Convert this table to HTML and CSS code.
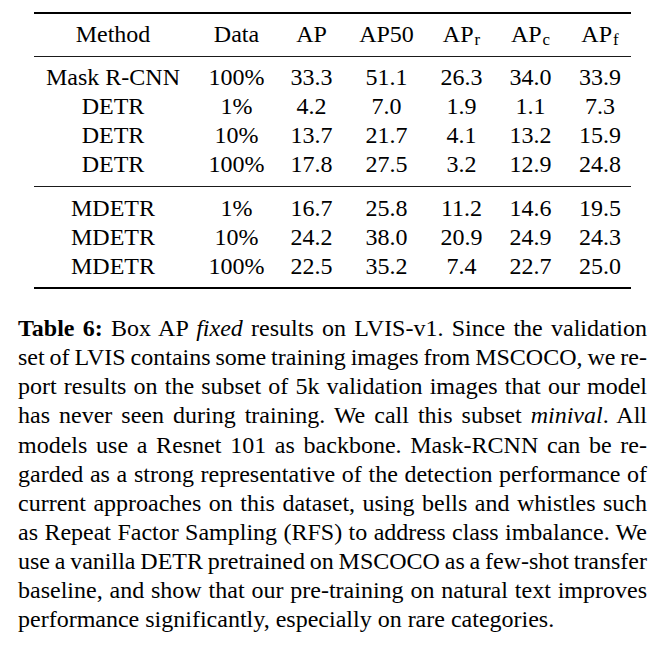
FILE: index.html
```html
<!DOCTYPE html>
<html>
<head>
<meta charset="utf-8">
<link rel="stylesheet" href="styles.css">
</head>
<body>
<div class="page">
  <table class="results">
    <colgroup>
      <col class="c-method"><col class="c-data"><col class="c-ap"><col class="c-ap50"><col class="c-apr"><col class="c-apc"><col class="c-apf">
    </colgroup>
    <thead>
      <tr><th>Method</th><th>Data</th><th>AP</th><th>AP50</th><th>AP<sub>r</sub></th><th>AP<sub>c</sub></th><th>AP<sub>f</sub></th></tr>
    </thead>
    <tbody class="grp grp-a">
      <tr><td>Mask R-CNN</td><td>100%</td><td>33.3</td><td>51.1</td><td>26.3</td><td>34.0</td><td>33.9</td></tr>
      <tr><td>DETR</td><td>1%</td><td>4.2</td><td>7.0</td><td>1.9</td><td>1.1</td><td>7.3</td></tr>
      <tr><td>DETR</td><td>10%</td><td>13.7</td><td>21.7</td><td>4.1</td><td>13.2</td><td>15.9</td></tr>
      <tr><td>DETR</td><td>100%</td><td>17.8</td><td>27.5</td><td>3.2</td><td>12.9</td><td>24.8</td></tr>
    </tbody>
    <tbody class="grp grp-b">
      <tr><td>MDETR</td><td>1%</td><td>16.7</td><td>25.8</td><td>11.2</td><td>14.6</td><td>19.5</td></tr>
      <tr><td>MDETR</td><td>10%</td><td>24.2</td><td>38.0</td><td>20.9</td><td>24.9</td><td>24.3</td></tr>
      <tr><td>MDETR</td><td>100%</td><td>22.5</td><td>35.2</td><td>7.4</td><td>22.7</td><td>25.0</td></tr>
    </tbody>
  </table>
  <div class="caption">
    <span class="ln"><b>Table 6:</b> Box AP <i>fixed</i> results on LVIS-v1. Since the validation</span>
    <span class="ln">set of LVIS contains some training images from MSCOCO, we re-</span>
    <span class="ln">port results on the subset of 5k validation images that our model</span>
    <span class="ln">has never seen during training. We call this subset <i>minival</i>. All</span>
    <span class="ln">models use a Resnet 101 as backbone. Mask-RCNN can be re-</span>
    <span class="ln">garded as a strong representative of the detection performance of</span>
    <span class="ln">current approaches on this dataset, using bells and whistles such</span>
    <span class="ln">as Repeat Factor Sampling (RFS) to address class imbalance. We</span>
    <span class="ln">use a vanilla DETR pretrained on MSCOCO as a few-shot transfer</span>
    <span class="ln">baseline, and show that our pre-training on natural text improves</span>
    <span class="ln last">performance significantly, especially on rare categories.</span>
  </div>
</div>
</body>
</html>
```
FILE: styles.css
```css
html, body {
  margin: 0;
  padding: 0;
  background: #fff;
}
body {
  color: #000;
  font-family: "Liberation Serif", "Times New Roman", serif;
}
.page {
  padding-top: 12px;
}
.results {
  margin-left: 34px;
  width: 597px;
  border-collapse: separate;
  border-spacing: 0;
  table-layout: fixed;
  font-size: 24px;
  line-height: 29px;
}
.c-method { width: 158px; }
.c-data { width: 89px; }
.c-ap { width: 61px; }
.c-ap50 { width: 89px; }
.c-apr { width: 61px; }
.c-apc { width: 77px; }
.c-apf { width: 62px; }
.results th,
.results td {
  padding: 0;
  text-align: center;
  font-weight: normal;
  white-space: nowrap;
}
.results th {
  border-top: 2px solid #000;
  border-bottom: 1px solid #1a1a1a;
  padding-top: 6px;
  padding-bottom: 7px;
}
.results sub {
  font-size: 0.7em;
  line-height: 0;
  vertical-align: -0.18em;
  margin-left: 1px;
}
.grp-a tr:first-child td { padding-top: 6px; }
.grp-a tr:last-child td {
  padding-bottom: 7px;
  border-bottom: 1px solid #1a1a1a;
}
.grp-b tr:first-child td { padding-top: 7px; }
.grp-b tr:last-child td {
  padding-bottom: 6px;
  border-bottom: 2px solid #000;
}
.caption {
  margin-top: 25px;
  margin-left: 18px;
  width: 629px;
  font-size: 24px;
  line-height: 29.13px;
}
.caption .ln {
  display: block;
  white-space: nowrap;
  word-spacing: -2.5px;
  text-align: justify;
  text-align-last: justify;
}
.caption .ln.last {
  word-spacing: 0;
  text-align: left;
  text-align-last: left;
}
```
